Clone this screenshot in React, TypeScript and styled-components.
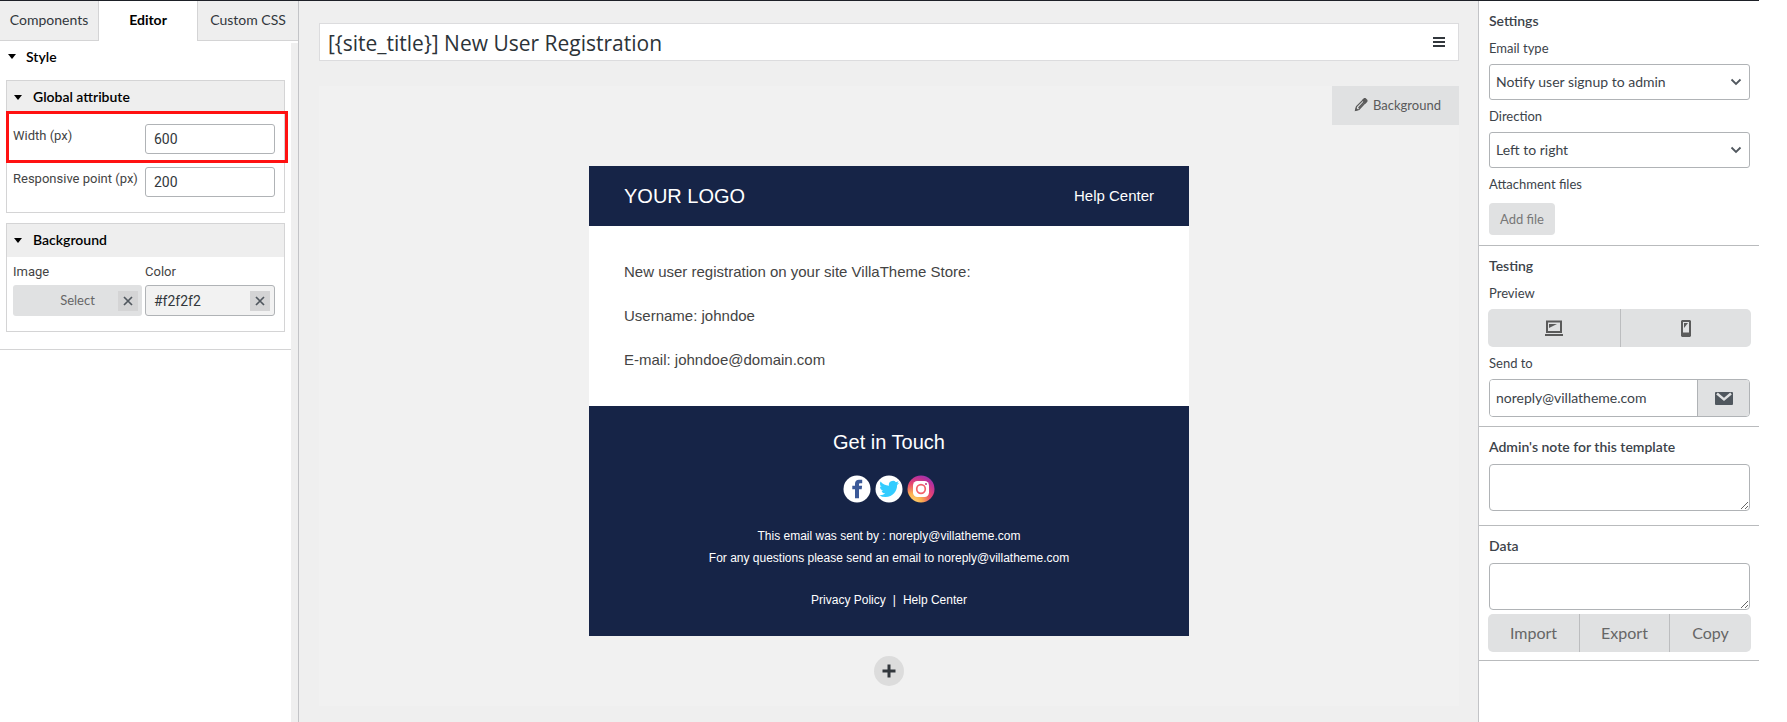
import React from 'react';
import styled, { createGlobalStyle, css } from 'styled-components';

const lato = "Lato, 'Noto Sans', sans-serif";
const roboto = "Roboto, 'Noto Sans', sans-serif";
const arial = "'Liberation Sans', Arial, sans-serif";
const openSans = "'Open Sans', 'Noto Sans', sans-serif";

const GlobalStyle = createGlobalStyle`
  *, *::before, *::after { box-sizing: border-box; }
  body { margin: 0; background: #fff; color: #3c434a; font: 14px/20px ${lato}; }
  button, input, select, textarea { font: inherit; color: inherit; margin: 0; }
  button { cursor: pointer; border: 0; padding: 0; }
  a { color: inherit; text-decoration: none; }
  h1, h2, h3, p { margin: 0; }
  svg { display: block; }
`;

const Page = styled.div`
  display: grid;
  grid-template-columns: 299px minmax(0, 1fr) 281px;
  min-height: 100vh;
  margin-right: 28px;
  border-top: 1px solid #1d2027;
`;

/* Left column */
const Sidebar = styled.aside`
  display: flex;
  flex-direction: column;
  gap: 2px;
  border-right: 1px solid #c3c4c7;
`;

const Tabs = styled.div`
  display: grid;
  grid-template-columns: 99px 98px 1fr;
`;

const Tab = styled.button<{ $active?: boolean; $side?: 'left' | 'right' }>`
  height: 40px;
  padding-bottom: 2px;
  color: #32373c;
  background: #eee;
  border: 0 solid #d4d4d5;
  border-bottom-width: 1px;
  ${p => p.$side === 'left' && css`border-right-width: 1px;`}
  ${p => p.$side === 'right' && css`border-left-width: 1px;`}
  ${p => p.$active && css`
    color: #000;
    font-weight: 700;
    background: #fff;
    border-bottom-color: #fff;
  `}
`;

const SidebarBody = styled.div`
  flex: 1;
  border-right: 7px solid #efefef;
`;

const StyleGroup = styled.section`
  padding: 2px 6px 17px;
  border-bottom: 1px solid #d4d4d5;
  display: flex;
  flex-direction: column;
  gap: 10px;
`;

const GroupTitle = styled.h2`
  display: flex;
  align-items: center;
  gap: 10px;
  height: 23px;
  margin-bottom: 2px;
  padding-left: 2px;
  color: #000;
  font-size: 14px;
  font-weight: 600;
`;

const Card = styled.section`
  border: 1px solid #d4d4d5;
  padding-bottom: 15px;
`;

const CardTitle = styled.h3`
  display: flex;
  align-items: center;
  gap: 11px;
  height: 33px;
  padding: 0 0 1px 7px;
  background: #eee;
  color: #000;
  font-size: 14px;
  font-weight: 600;
`;

const AttributeRow = styled.div<{ $highlight?: boolean }>`
  display: grid;
  grid-template-columns: 132px 130px;
  padding: 4px 6px 0;
  label { line-height: 24px; }
  ${p => p.$highlight && css`
    margin: -3px -4px 0 -1px;
    padding: 10px 4px 6px;
    border: 3px solid #f11;
  `}
`;

const FieldLabel = styled.label`
  color: #444;
  font: 13px/18px ${roboto};
`;

const NumberInput = styled.input`
  width: 100%;
  height: 30px;
  padding: 0 8px;
  border: 1px solid #b0b3b6;
  border-radius: 3px;
  background: #fff;
  color: #32373c;
  font: 14px/28px ${roboto};
`;

const BackgroundFields = styled.div`
  display: grid;
  grid-template-columns: 129px 130px;
  gap: 3px;
  padding: 6px 6px 0;
`;

const Field = styled.div`
  display: flex;
  flex-direction: column;
  gap: 4px;
`;

const ClearableBox = styled.div<{ $outlined?: boolean }>`
  display: flex;
  align-items: center;
  height: 31px;
  padding-right: 4px;
  border-radius: 3px;
  background: #e0e1e2;
  ${p => p.$outlined && css`
    border: 1px solid #b0b3b6;
    background: #f2f2f2;
  `}
`;

const SelectImage = styled.button`
  flex: 1;
  padding: 0 0 2px 24px;
  background: none;
  color: #666;
  font-size: 13px;
`;

const ColorInput = styled.input`
  flex: 1;
  min-width: 0;
  padding: 0 8px;
  border: 0;
  background: none;
  color: #32373c;
  font: 14px/28px ${roboto};
`;

const ClearButton = styled.button`
  display: grid;
  place-items: center;
  width: 20px;
  height: 20px;
  background: #d4d4d5;
  color: #50575e;
`;

/* Middle column */
const Main = styled.main`
  padding: 22px 19px 0 20px;
  background: #efefef;
`;

const SubjectBar = styled.div`
  display: flex;
  align-items: center;
  height: 38px;
  padding-right: 11px;
  border: 1px solid #dcdcde;
  background: #fff;
`;

const SubjectInput = styled.input`
  flex: 1;
  min-width: 0;
  padding: 2px 8px 0;
  border: 0;
  background: none;
  color: #2c3338;
  font: 21px/30px ${openSans};
`;

const MenuButton = styled.button`
  background: none;
  color: #32373c;
`;

const Canvas = styled.div`
  display: flex;
  flex-direction: column;
  align-items: center;
  margin-top: 25px;
  background: #f1f1f1;
`;

const BackgroundButton = styled.button`
  align-self: flex-end;
  display: flex;
  align-items: center;
  justify-content: center;
  gap: 5px;
  width: 127px;
  height: 39px;
  margin-bottom: 41px;
  padding: 0 0 2px 4px;
  background: #e0e1e2;
  color: #5a5a5a;
  font-size: 13px;
`;

const Email = styled.article`
  width: 100%;
  max-width: 600px;
  font-family: ${arial};
`;

const EmailHeader = styled.header`
  display: flex;
  align-items: center;
  justify-content: space-between;
  height: 60px;
  padding: 0 35px;
  background: #162447;
  color: #fff;
  font-size: 15px;
`;

const Heading = styled.h2`
  font-size: 20px;
  font-weight: 400;
  line-height: 24px;
`;

const EmailBody = styled.div`
  display: flex;
  flex-direction: column;
  gap: 22px;
  padding: 35px;
  background: #fff;
  color: #444;
  font-size: 15px;
  line-height: 22px;
`;

const EmailFooter = styled.footer`
  display: flex;
  flex-direction: column;
  align-items: center;
  padding: 24px 35px 25px;
  background: #162447;
  color: #fff;
  font-size: 12px;
  line-height: 22px;
  text-align: center;
`;

const Socials = styled.nav`
  display: flex;
  gap: 4px;
  margin: 21px 0 22px;
`;

const FooterLinks = styled.p`
  display: flex;
  gap: 7px;
  margin-top: 20px;
`;

const AddRow = styled.button`
  display: grid;
  place-items: center;
  width: 30px;
  height: 30px;
  margin: 20px 0;
  border-radius: 50%;
  background: #dcdcdc;
  color: #32373c;
`;

/* Right column */
const Settings = styled.aside`
  border-left: 1px solid #c3c4c7;
  background: #fff;
`;

const Panel = styled.section<{ $end: number }>`
  padding: 10px 9px ${p => p.$end}px 10px;
  border-bottom: 1px solid #b9bbbd;
`;

const PanelTitle = styled.h2`
  display: block;
  margin-bottom: 7px;
  font-size: 14px;
  font-weight: 600;
`;

const PanelField = styled.div`
  display: flex;
  flex-direction: column;
  gap: 6px;
  font-size: 13px;
  & + & { margin-top: 6px; }
`;

const SelectWrap = styled.div`
  position: relative;
  svg {
    position: absolute;
    right: 8px;
    top: 12px;
    pointer-events: none;
  }
`;

const Select = styled.select`
  appearance: none;
  width: 100%;
  height: 36px;
  padding: 0 24px 0 6px;
  border: 1px solid #b0b3b6;
  border-radius: 3px;
  background: #fff;
  color: #3c434a;
  font-size: 14px;
`;

const AddFile = styled.button`
  align-self: flex-start;
  height: 32px;
  margin-top: 3px;
  padding: 0 11px;
  border-radius: 4px;
  background: #e0e1e2;
  color: #777;
  font-size: 13px;
`;

const ButtonGroup = styled.div<{ $columns: string }>`
  display: grid;
  grid-template-columns: ${p => p.$columns};
  height: 38px;
  margin: 0 -1px;
  overflow: hidden;
  border-radius: 5px;
  background: #e0e1e2;
`;

const GroupButton = styled.button`
  display: grid;
  place-items: center;
  background: none;
  color: #666;
  font-size: 16px;
  & + & { border-left: 1px solid #bcbdbf; }
`;

const SendRow = styled.div`
  display: flex;
  height: 38px;
  overflow: hidden;
  border: 1px solid #b0b3b6;
  border-radius: 4px;
`;

const SendInput = styled.input`
  flex: 1;
  min-width: 0;
  padding: 0 6px;
  border: 0;
  font-size: 14px;
`;

const SendButton = styled.button`
  display: grid;
  place-items: center;
  width: 52px;
  border-left: 1px solid #b0b3b6;
  background: #e0e1e2;
`;

const NoteArea = styled.textarea`
  display: block;
  width: 100%;
  height: 47px;
  border: 1px solid #b0b3b6;
  border-radius: 4px;
  background: #fff;
`;

const DataFields = styled.div`
  display: flex;
  flex-direction: column;
  gap: 4px;
`;

const Caret = () => (
  <svg width="8" height="5" viewBox="0 0 8 5" aria-hidden="true"><path d="M0 0h8L4 5z" fill="currentColor" /></svg>
);

const Cross = () => (
  <svg width="10" height="10" viewBox="0 0 10 10" aria-hidden="true">
    <path d="M1 1l8 8M9 1L1 9" stroke="currentColor" strokeWidth="1.7" fill="none" />
  </svg>
);

const Chevron = () => (
  <svg width="12" height="12" viewBox="0 0 12 12" aria-hidden="true">
    <path d="M1.5 3.5L6 8l4.5-4.5" stroke="#50575e" strokeWidth="1.8" fill="none" />
  </svg>
);

const Facebook = () => (
  <svg width="28" height="28" viewBox="0 0 28 28" aria-hidden="true">
    <circle cx="14" cy="14" r="13.5" fill="#fff" />
    <path d="M12 23.2v-9H9.300v-3.400H12V8.700C12 6 13.600 4.800 16 4.800h3.200v3.500h-1.800c-1 0-1.400.5-1.400 1.300v1.200h3.100l-.4 3.400H16v9z" fill="#3b5998" />
  </svg>
);

const Twitter = () => (
  <svg width="28" height="28" viewBox="0 0 28 28" aria-hidden="true">
    <circle cx="14" cy="14" r="13.5" fill="#fff" />
    <g transform="translate(4.2 4) scale(.83)">
      <path
        d="M23.950 4.570a10 10 0 0 1-2.820.770 4.960 4.960 0 0 0 2.160-2.720c-.95.550-2 .950-3.130 1.180a4.920 4.920 0 0 0-8.380 4.480C7.690 8.090 4.070 6.130 1.640 3.160a4.820 4.820 0 0 0-.67 2.480c0 1.710.87 3.210 2.190 4.100a4.900 4.900 0 0 1-2.230-.62v.06a4.920 4.920 0 0 0 3.950 4.830 5 5 0 0 1-2.210.08 4.940 4.940 0 0 0 4.600 3.420A9.870 9.870 0 0 1 0 19.540a13.990 13.990 0 0 0 7.550 2.210c9.050 0 14-7.500 14-13.980 0-.21 0-.42-.02-.63a9.940 9.940 0 0 0 2.460-2.550z"
        fill="#3cf"
      />
    </g>
  </svg>
);

const Instagram = () => (
  <svg width="28" height="28" viewBox="0 0 28 28" aria-hidden="true">
    <defs>
      <radialGradient id="insta" cx=".2" cy="1" r="1.15">
        <stop offset="0" stopColor="#fed576" />
        <stop offset=".28" stopColor="#fbb24f" />
        <stop offset=".6" stopColor="#e8466f" />
        <stop offset=".85" stopColor="#b8309c" />
        <stop offset="1" stopColor="#8f3bb5" />
      </radialGradient>
    </defs>
    <circle cx="14" cy="14" r="13.5" fill="url(#insta)" />
    <rect x="6" y="6" width="16" height="16" rx="4.5" fill="#fff" />
    <circle cx="14" cy="14" r="4.3" fill="none" stroke="#f2606a" strokeWidth="1.7" />
    <circle cx="19" cy="9" r="1" fill="#c13584" />
  </svg>
);

export default function App() {
  return (
    <>
      <GlobalStyle />
      <Page>
        <Sidebar>
          <Tabs role="tablist">
            <Tab role="tab" $side="left">Components</Tab>
            <Tab role="tab" $active aria-selected="true">Editor</Tab>
            <Tab role="tab" $side="right">Custom CSS</Tab>
          </Tabs>
          <SidebarBody>
            <StyleGroup>
              <GroupTitle><Caret />Style</GroupTitle>
              <Card>
                <CardTitle><Caret />Global attribute</CardTitle>
                <AttributeRow $highlight>
                  <FieldLabel htmlFor="width">Width (px)</FieldLabel>
                  <NumberInput id="width" defaultValue="600" />
                </AttributeRow>
                <AttributeRow>
                  <FieldLabel htmlFor="point">Responsive point (px)</FieldLabel>
                  <NumberInput id="point" defaultValue="200" />
                </AttributeRow>
              </Card>
              <Card>
                <CardTitle><Caret />Background</CardTitle>
                <BackgroundFields>
                  <Field>
                    <FieldLabel htmlFor="image">Image</FieldLabel>
                    <ClearableBox>
                      <SelectImage id="image">Select</SelectImage>
                      <ClearButton aria-label="Clear image"><Cross /></ClearButton>
                    </ClearableBox>
                  </Field>
                  <Field>
                    <FieldLabel htmlFor="color">Color</FieldLabel>
                    <ClearableBox $outlined>
                      <ColorInput id="color" defaultValue="#f2f2f2" />
                      <ClearButton aria-label="Clear color"><Cross /></ClearButton>
                    </ClearableBox>
                  </Field>
                </BackgroundFields>
              </Card>
            </StyleGroup>
          </SidebarBody>
        </Sidebar>

        <Main>
          <SubjectBar>
            <SubjectInput aria-label="Subject" defaultValue="[{site_title}] New User Registration" />
            <MenuButton aria-label="Menu">
              <svg width="16" height="12" viewBox="0 0 16 12"><path d="M2 2h12M2 6h12M2 10h12" stroke="currentColor" strokeWidth="2" /></svg>
            </MenuButton>
          </SubjectBar>
          <Canvas>
            <BackgroundButton>
              <svg width="14" height="15" viewBox="0 0 14 15" aria-hidden="true">
                <path d="M1.500 13.500l1-4L9 3l2.500 2.500-6.500 7zM4.500 11L10 5" fill="none" stroke="currentColor" strokeWidth="1.2" />
                <path d="M8 3.200L10 1h1.500L13.500 3v1.500L11.500 6.700zM1 14l.8-3.500L4.500 13z" fill="currentColor" />
              </svg>
              Background
            </BackgroundButton>
            <Email>
              <EmailHeader>
                <Heading>YOUR LOGO</Heading>
                <a href="#help">Help Center</a>
              </EmailHeader>
              <EmailBody>
                <p>New user registration on your site VillaTheme Store:</p>
                <p>Username: johndoe</p>
                <p>E-mail: johndoe@domain.com</p>
              </EmailBody>
              <EmailFooter>
                <Heading>Get in Touch</Heading>
                <Socials>
                  <a href="#facebook" aria-label="Facebook"><Facebook /></a>
                  <a href="#twitter" aria-label="Twitter"><Twitter /></a>
                  <a href="#instagram" aria-label="Instagram"><Instagram /></a>
                </Socials>
                <p>This email was sent by : <a href="#mail">noreply@villatheme.com</a></p>
                <p>For any questions please send an email to <a href="#mail">noreply@villatheme.com</a></p>
                <FooterLinks>
                  <a href="#privacy">Privacy Policy</a>
                  <span>|</span>
                  <a href="#help">Help Center</a>
                </FooterLinks>
              </EmailFooter>
            </Email>
            <AddRow aria-label="Add row">
              <svg width="14" height="14" viewBox="0 0 14 14"><path d="M7 .5v13M.5 7h13" stroke="currentColor" strokeWidth="3" /></svg>
            </AddRow>
          </Canvas>
        </Main>

        <Settings>
          <Panel $end={10}>
            <PanelTitle>Settings</PanelTitle>
            <PanelField>
              <label htmlFor="type">Email type</label>
              <SelectWrap>
                <Select id="type"><option>Notify user signup to admin</option></Select>
                <Chevron />
              </SelectWrap>
            </PanelField>
            <PanelField>
              <label htmlFor="direction">Direction</label>
              <SelectWrap>
                <Select id="direction"><option>Left to right</option></Select>
                <Chevron />
              </SelectWrap>
            </PanelField>
            <PanelField>
              <label htmlFor="file">Attachment files</label>
              <AddFile id="file">Add file</AddFile>
            </PanelField>
          </Panel>
          <Panel $end={9}>
            <PanelTitle>Testing</PanelTitle>
            <PanelField>
              <span>Preview</span>
              <ButtonGroup $columns="1fr 1fr">
                <GroupButton aria-label="Desktop preview">
                  <svg width="18" height="16" viewBox="0 0 18 16">
                    <path d="M2 1.500h14v10.500H2z" fill="none" stroke="#5a5a5a" strokeWidth="2" />
                    <path d="M4 4h8L4 8zM0 14h18v2H0z" fill="#5a5a5a" />
                  </svg>
                </GroupButton>
                <GroupButton aria-label="Mobile preview">
                  <svg width="10" height="17" viewBox="0 0 10 17">
                    <path fillRule="evenodd" d="M1 0h8l1 1v15l-1 1H1l-1-1V1zM2 2v10.500h6V2z" fill="#5a5a5a" />
                    <path d="M3 3h4L3 8z" fill="#5a5a5a" />
                  </svg>
                </GroupButton>
              </ButtonGroup>
            </PanelField>
            <PanelField>
              <label htmlFor="send">Send to</label>
              <SendRow>
                <SendInput id="send" defaultValue="noreply@villatheme.com" />
                <SendButton aria-label="Send">
                  <svg width="18" height="13" viewBox="0 0 18 13">
                    <rect width="18" height="13" rx="1" fill="#50575e" />
                    <path d="M2 1.500L9 7.500l7-6" fill="none" stroke="#e0e1e2" strokeWidth="2.4" />
                  </svg>
                </SendButton>
              </SendRow>
            </PanelField>
          </Panel>
          <Panel $end={14}>
            <PanelTitle as="label" htmlFor="note">Admin's note for this template</PanelTitle>
            <NoteArea id="note" />
          </Panel>
          <Panel $end={8}>
            <PanelTitle as="label" htmlFor="data">Data</PanelTitle>
            <DataFields>
              <NoteArea id="data" />
              <ButtonGroup $columns="91px 90px 1fr">
                <GroupButton>Import</GroupButton>
                <GroupButton>Export</GroupButton>
                <GroupButton>Copy</GroupButton>
              </ButtonGroup>
            </DataFields>
          </Panel>
        </Settings>
      </Page>
    </>
  );
}
